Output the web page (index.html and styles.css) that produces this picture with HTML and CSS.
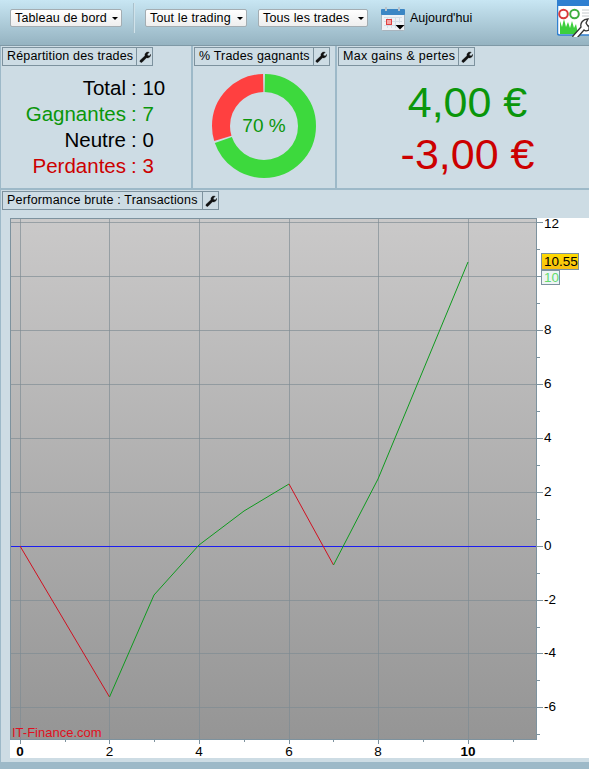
FILE: index.html
```html
<!DOCTYPE html>
<html lang="fr">
<head>
  <meta charset="UTF-8">
  <title>Tableau de bord</title>
  <link rel="stylesheet" href="styles.css">
</head>
<body>
  <!-- Toolbar -->
  <div class="toolbar">
    <div class="drop-btn drop-first">Tableau de bord<span class="caret"></span></div>
    <div class="toolbar-sep"></div>
    <div class="drop-btn drop-trading">Tout le trading<span class="caret"></span></div>
    <div class="drop-btn drop-trades">Tous les trades<span class="caret"></span></div>
    <svg class="calendar" viewBox="0 0 24 24" width="24" height="24">
      <rect x="0.5" y="3.5" width="23" height="20" rx="1" fill="#eef2f6" stroke="#a9b4bd"/>
      <rect x="0" y="2" width="24" height="6" rx="1" fill="#3b86c4"/>
      <rect x="4" y="0" width="2" height="4" fill="#b9c3ca"/>
      <rect x="17" y="0" width="2" height="4" fill="#b9c3ca"/>
      <path d="M3 10.500h18M3 14.500h18M3 18.500h12M6.500 10v11M10.500 10v11M14.500 10v11M18.500 10v6" stroke="#d3dee7" fill="none"/>
      <rect x="5.500" y="12.500" width="5" height="5" fill="#f7a6a6" stroke="#e04040"/>
      <path d="M14.500 18h9l-4.500 4.500z" fill="#000"/>
    </svg>
    <span class="today">Aujourd'hui</span>
    <svg class="tools-icon" viewBox="0 0 32 37" width="32" height="37">
      <rect x="0.500" y="-3" width="36" height="38" rx="2" fill="#fff" stroke="#2f7fd0" stroke-width="1.500"/>
      <rect x="0" y="0" width="32" height="6" fill="#2f7fd0"/>
      <circle cx="6.500" cy="14" r="4.300" fill="none" stroke="#d83a3a" stroke-width="2"/>
      <circle cx="17.500" cy="14" r="4.300" fill="none" stroke="#3fae3f" stroke-width="2"/>
      <path d="M25 10h7M25 13h7M25 16h7" stroke="#c4c9cc"/>
      <path d="M3 34V21l2 6 2-8 2 8 2-5 2 6 2-7 2 7 2-4 2 10z" fill="#3dcf3d"/>
      <path d="M16 36l8-9c-1-4 2-8 7-8l-2 4 2 3h1v4c-2 1-4 1-5 0l-7 8c-2 1-5 0-4-2z" fill="#fff" stroke="#333" stroke-width="1.300"/>
    </svg>
  </div>

  <!-- Top panels -->
  <div class="panels">
    <div class="panel panel-stats">
      <div class="panel-head">
        <span class="panel-title">Répartition des trades</span>
        <span class="tool-btn"><svg viewBox="0 0 12 12" width="12" height="12"><path d="M1 9.500 6 4.800C5.500 3 6.800 1 9 1L10.200 1.300 8.300 3.200 8.900 4.700 10.400 4.900 11.700 3.300C12 5.500 10 7.500 7.500 6.700L3 11.300C2 12 .3 10.500 1 9.500Z"/></svg></span>
      </div>
      <div class="stats">
        <span class="stat-label">Total</span><span>: 10</span>
        <span class="stat-label win">Gagnantes</span><span class="win">: 7</span>
        <span class="stat-label">Neutre</span><span>: 0</span>
        <span class="stat-label loss">Perdantes</span><span class="loss">: 3</span>
      </div>
    </div>
    <div class="panel panel-donut">
      <div class="panel-head">
        <span class="panel-title">% Trades gagnants</span>
        <span class="tool-btn"><svg viewBox="0 0 12 12" width="12" height="12"><path d="M1 9.500 6 4.800C5.500 3 6.800 1 9 1L10.200 1.300 8.300 3.200 8.900 4.700 10.400 4.900 11.700 3.300C12 5.500 10 7.500 7.500 6.700L3 11.300C2 12 .3 10.500 1 9.500Z"/></svg></span>
      </div>
      <div class="donut">
        <svg viewBox="0 0 106 106" width="106" height="106">
          <g transform="rotate(-90 53 53)" fill="none" stroke-width="18">
            <circle cx="53" cy="53" r="43" pathLength="100" stroke="#3dd93d" stroke-dasharray="69.400 30.600" stroke-dashoffset="-0.300"/>
            <circle cx="53" cy="53" r="43" pathLength="100" stroke="#ff4040" stroke-dasharray="29.400 70.600" stroke-dashoffset="-70.300"/>
          </g>
        </svg>
        <span class="donut-label">70 %</span>
      </div>
    </div>
    <div class="panel panel-max">
      <div class="panel-head">
        <span class="panel-title">Max gains &amp; pertes</span>
        <span class="tool-btn"><svg viewBox="0 0 12 12" width="12" height="12"><path d="M1 9.500 6 4.800C5.500 3 6.800 1 9 1L10.200 1.300 8.300 3.200 8.900 4.700 10.400 4.900 11.700 3.300C12 5.500 10 7.500 7.500 6.700L3 11.300C2 12 .3 10.500 1 9.500Z"/></svg></span>
      </div>
      <div class="amounts">
        <div class="amount win">4,00 €</div>
        <div class="amount loss">-3,00 €</div>
      </div>
    </div>
  </div>

  <!-- Chart section -->
  <div class="section">
    <div class="panel-head">
      <span class="panel-title">Performance brute : Transactions</span>
      <span class="tool-btn"><svg viewBox="0 0 12 12" width="12" height="12"><path d="M1 9.500 6 4.800C5.500 3 6.800 1 9 1L10.200 1.300 8.300 3.200 8.900 4.700 10.400 4.900 11.700 3.300C12 5.500 10 7.500 7.500 6.700L3 11.300C2 12 .3 10.500 1 9.500Z"/></svg></span>
    </div>
    <!-- viewBox uses the page coordinates of the plot -->
    <svg class="chart" viewBox="10 218 579 540" width="579" height="540">
      <defs>
        <linearGradient id="plotBg" x1="0" y1="0" x2="0" y2="1">
          <stop offset="0" stop-color="#cac9c9"/>
          <stop offset="1" stop-color="#959595"/>
        </linearGradient>
        <linearGradient id="tagBg" x1="0" y1="0" x2="0" y2="1">
          <stop offset="0" stop-color="#ffdb00"/>
          <stop offset="1" stop-color="#f9bf10"/>
        </linearGradient>
      </defs>
      <rect x="10.500" y="218.500" width="526" height="521" fill="url(#plotBg)" stroke="#7d929e"/>
      <path class="grid" d="M20.500 219v520M109.500 219v520M199.500 219v520M289.500 219v520M378.500 219v520M468.500 219v520"/>
      <path class="grid" d="M11 222.500h525M11 276.500h525M11 330.500h525M11 384.500h525M11 438.500h525M11 492.500h525M11 600.500h525M11 653.500h525M11 707.500h525"/>
      <path class="ticks" d="M537 222.500h6M537 249.500h3M537 276.500h6M537 303.500h3M537 330.500h6M537 357.500h3M537 384.500h6M537 411.500h3M537 438.500h6M537 465.500h3M537 492.500h6M537 519.500h3M537 546.500h6M537 573.500h3M537 600.500h6M537 627.500h3M537 653.500h6M537 680.500h3M537 707.500h6M537 734.500h3"/>
      <path class="ticks" d="M20.500 740v4M65.500 740v2M109.500 740v4M154.500 740v2M199.500 740v4M244.500 740v2M289.500 740v4M333.500 740v2M378.500 740v4M423.500 740v2M468.500 740v4M513.500 740v2"/>
      <path class="zero-line" d="M11 546.500h525"/>
      <path class="line-loss" d="M20 546 109.500 697"/>
      <path class="line-win" d="M109.500 697 154 595 199 545 244 511 289 484"/>
      <path class="line-loss" d="M289 484 333.500 565"/>
      <path class="line-win" d="M333.500 565 378 479 468 262"/>
      <text class="watermark" x="12" y="737">IT-Finance.com</text>
      <g class="axis-y">
        <text x="544" y="228">12</text>
        <text x="544" y="334">8</text>
        <text x="544" y="388">6</text>
        <text x="544" y="442">4</text>
        <text x="544" y="496">2</text>
        <text x="544" y="550">0</text>
        <text x="544" y="604">-2</text>
        <text x="544" y="657">-4</text>
        <text x="544" y="711">-6</text>
      </g>
      <g class="axis-x">
        <text class="axis-strong" x="20" y="756">0</text>
        <text x="109.500" y="756">2</text>
        <text x="199" y="756">4</text>
        <text x="289" y="756">6</text>
        <text x="378" y="756">8</text>
        <text class="axis-strong" x="468" y="756">10</text>
      </g>
      <rect x="541.500" y="253.500" width="37" height="16" fill="url(#tagBg)" stroke="#7d929e"/>
      <text class="tag-text" x="544" y="266">10.55</text>
      <rect x="541.500" y="270.500" width="18" height="14" fill="#eef4f5" stroke="#7d929e"/>
      <text class="tag-text tag-green" x="544" y="282">10</text>
    </svg>
  </div>
</body>
</html>
```
FILE: styles.css
```css
/* General Reset */
* {
  margin: 0;
  padding: 0;
  box-sizing: border-box;
}

html, body {
  height: 100%;
  overflow: hidden;
}

body {
  font-family: "Liberation Sans", Arial, sans-serif;
  font-size: 12px;
  color: #000;
  background-color: #9db9c8;
}

/* Toolbar */
.toolbar {
  display: flex;
  align-items: center;
  height: 46px;
  padding: 0 0 9px 10px;
  background: linear-gradient(#c8e6f3, #95b3c1);
  border-bottom: 1px solid #7f99a6;
  overflow: hidden;
}

.drop-btn {
  display: flex;
  align-items: center;
  justify-content: space-between;
  height: 18px;
  padding: 0 3px 0 4px;
  font-size: 12.500px;
  letter-spacing: 0.150px;
  background: linear-gradient(#fff, #eeeeee);
  border: 1px solid #a4adb2;
  border-radius: 2px;
}

.drop-first { width: 112px; }
.drop-trading { width: 102px; }
.drop-trades { width: 110px; margin-left: 11px; }

.caret {
  border-left: 3.500px solid transparent;
  border-right: 3.500px solid transparent;
  border-top: 3.500px solid #000;
}

.toolbar-sep {
  width: 2px;
  height: 30px;
  margin: 0 10px 0 11px;
  background-color: #a9c1cc;
  border-right: 1px solid #d0e2ea;
}

.calendar {
  margin-left: 13px;
  margin-top: 2px;
}

.today {
  margin-left: 5px;
  font-size: 12.500px;
}

.tools-icon {
  margin-left: auto;
  align-self: flex-start;
}

/* Panels */
.panels {
  display: flex;
  height: 144px;
  background-color: #cddce4;
  border-bottom: 2px solid #9db9c8;
}

.panel {
  padding: 1px 0 0 1px;
  border-right: 2px solid #9db9c8;
}

.panel-stats {
  width: 193px;
  border-left: 1px solid #9db9c8;
}

.panel-donut { width: 144px; }

.panel-max {
  flex: 1;
  border-right: none;
}

.panel-head {
  display: inline-flex;
  height: 19px;
  border: 1px solid #7d929e;
  font-size: 12.500px;
  line-height: 17px;
}

.panel-title {
  padding: 0 3px 0 4px;
  letter-spacing: 0.180px;
}

.panel-max .panel-title {
  letter-spacing: 0.300px;
}

.tool-btn {
  display: flex;
  align-items: center;
  justify-content: center;
  width: 16px;
  border-left: 1px solid #7d929e;
}

.tool-btn svg {
  fill: #111;
  stroke: #111;
  stroke-width: 0.400;
}

.stats {
  display: grid;
  grid-template-columns: 124px auto;
  column-gap: 5px;
  margin-top: 9px;
  font-size: 20.500px;
  line-height: 26px;
}

.stat-label {
  text-align: right;
}

.win { color: #0a960a; }
.loss { color: #cc0000; }

.donut {
  position: relative;
  width: 106px;
  margin: 7px 0 0 17px;
}

.donut svg {
  display: block;
}

.donut-label {
  position: absolute;
  left: 0;
  right: 0;
  top: 41px;
  text-align: center;
  font-size: 19px;
  line-height: 24px;
  color: #0a960a;
}

.amounts {
  margin-top: 10px;
  padding-left: 8px;
  text-align: center;
}

.amount {
  font-size: 43px;
  line-height: 52px;
}

/* Chart section */
.section {
  height: 572px;
  padding: 1px 0 0 1px;
  background-color: #cddce4;
  border-left: 1px solid #9db9c8;
}

.section .panel-head {
  display: flex;
  width: 217px;
}

.section .panel-title {
  flex: 1;
}

.chart {
  display: block;
  margin: 8px 0 0 8px;
  background-color: #fff;
  overflow: visible;
}

.grid {
  fill: none;
  stroke: #7d8b92;
  stroke-opacity: 0.650;
}

.ticks {
  fill: none;
  stroke: #7d929e;
}

.zero-line {
  fill: none;
  stroke: #1c1cf0;
}

.line-win,
.line-loss {
  fill: none;
}

.line-win { stroke: #0f9a1e; }
.line-loss { stroke: #d01020; }

.watermark {
  font-size: 13px;
  fill: #e01020;
}

.axis-y text,
.axis-x text,
.tag-text {
  font-size: 13.500px;
}

.axis-x text {
  text-anchor: middle;
}

.axis-x .axis-strong {
  font-weight: bold;
}

.tag-green {
  fill: #63dc6e;
}
```
